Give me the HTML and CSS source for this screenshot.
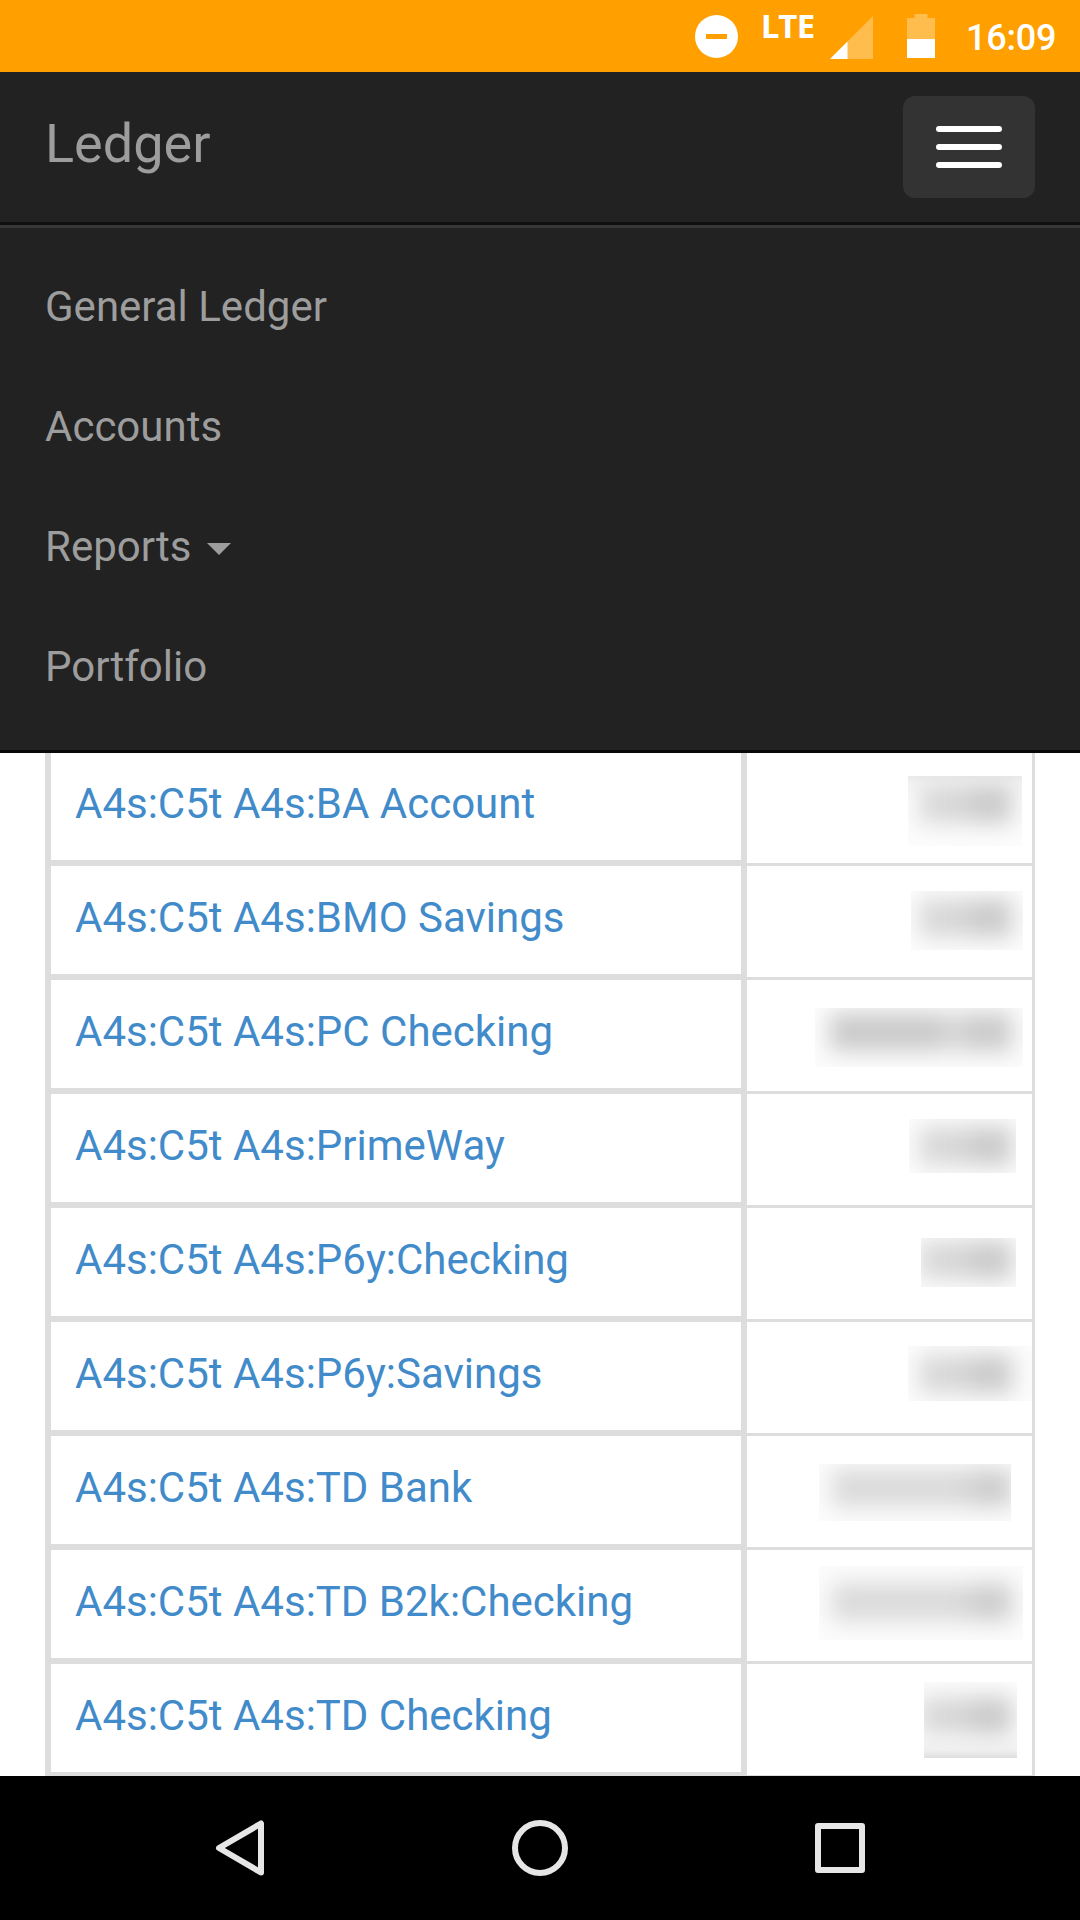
FILE: index.html
```html
<!DOCTYPE html>
<html lang="en">
<head>
<meta charset="utf-8">
<title>Ledger</title>
<link rel="stylesheet" href="styles.css">
</head>
<body>
<div class="status-bar">
  <svg class="dnd" width="43" height="43" viewBox="0 0 43 43"><circle cx="21.5" cy="21.5" r="21.5" fill="#fff"/><rect x="11" y="19" width="21" height="5" fill="#ffa000"/></svg>
  <span class="network">LTE</span>
  <svg class="signal" width="43" height="43" viewBox="0 0 43 43"><path d="M0 43L43 0V43Z" fill="#ffbd4d"/><path d="M0 43L17.5 25.5V43Z" fill="#fff"/></svg>
  <svg class="battery" width="28" height="44" viewBox="0 0 28 44"><path d="M7.5 0H20.500V4H28V44H0V4H7.500Z" fill="#ffbd4d"/><rect y="25" width="28" height="19" fill="#fff"/></svg>
  <span class="clock">16:09</span>
</div>
<header class="navbar">
  <div class="navbar-header">
    <a class="brand">Ledger</a>
    <button class="toggle" aria-label="Toggle navigation"><span></span><span></span><span></span></button>
  </div>
  <nav class="menu">
    <a>General Ledger</a>
    <a>Accounts</a>
    <a>Reports<i class="caret"></i></a>
    <a>Portfolio</a>
  </nav>
</header>
<main class="accounts">
  <div class="row"><a class="name">A4s:C5t A4s:BA Account</a><div class="amount"><div class="redacted r1 short"></div></div></div>
  <div class="row"><a class="name">A4s:C5t A4s:BMO Savings</a><div class="amount"><div class="redacted r2 short"></div></div></div>
  <div class="row"><a class="name">A4s:C5t A4s:PC Checking</a><div class="amount"><div class="redacted r3 wide"></div></div></div>
  <div class="row"><a class="name">A4s:C5t A4s:PrimeWay</a><div class="amount"><div class="redacted r4 short"></div></div></div>
  <div class="row"><a class="name">A4s:C5t A4s:P6y:Checking</a><div class="amount"><div class="redacted r5 short"></div></div></div>
  <div class="row"><a class="name">A4s:C5t A4s:P6y:Savings</a><div class="amount"><div class="redacted r6 short"></div></div></div>
  <div class="row"><a class="name">A4s:C5t A4s:TD Bank</a><div class="amount"><div class="redacted r7 long"></div></div></div>
  <div class="row"><a class="name">A4s:C5t A4s:TD B2k:Checking</a><div class="amount"><div class="redacted r8 long"></div></div></div>
  <div class="row"><a class="name">A4s:C5t A4s:TD Checking</a><div class="amount"><div class="redacted r9 short"></div></div></div>
</main>
<footer class="system-nav">
  <svg width="56" height="60" viewBox="0 0 56 60"><path d="M47 5.500V54.500L5 30Z"/></svg>
  <svg width="60" height="60" viewBox="0 0 60 60"><circle cx="30" cy="30" r="25"/></svg>
  <svg width="60" height="60" viewBox="0 0 60 60"><rect x="8" y="8" width="44" height="44"/></svg>
</footer>
</body>
</html>
```

FILE: styles.css
```css
* { box-sizing: border-box; }
body {
  margin: 0;
  width: 1080px;
  height: 1920px;
  overflow: hidden;
  display: flex;
  flex-direction: column;
  background: #fff;
  font: 42px/60px Roboto, sans-serif;
}

/* Status bar */
.status-bar {
  flex: none;
  height: 72px;
  display: flex;
  align-items: flex-start;
  padding-left: 695px;
  background: #ffa000;
  color: #fff;
}
.dnd { margin-top: 15px; }
.network {
  width: 54px;
  margin: 10px 0 0 23px;
  font: bold 33px/32px "Noto Sans", sans-serif;
  letter-spacing: -0.5px;
}
.signal { margin: 16px 0 0 15px; }
.battery { margin: 14px 0 0 34px; }
.clock {
  margin: 15px 0 0 31px;
  font-size: 36px;
  line-height: 46px;
  font-weight: 500;
  letter-spacing: -0.2px;
}

/* Navbar */
.navbar {
  flex: none;
  height: 681px;
  background: #222;
  border-bottom: 3px solid #080808;
  color: #9d9d9d;
  position: relative;
}
.navbar-header {
  height: 153px;
  padding: 24px 45px 0;
  display: flex;
  justify-content: space-between;
  align-items: flex-start;
  border-bottom: 3px solid #101010;
}
.brand {
  margin-top: 18px;
  font-size: 54px;
  line-height: 60px;
}
.toggle {
  width: 132px;
  height: 102px;
  padding: 0;
  border: 0;
  border-radius: 12px;
  background: #333;
  display: flex;
  flex-direction: column;
  align-items: center;
  justify-content: center;
  gap: 12px;
}
.toggle span {
  width: 66px;
  height: 6px;
  border-radius: 3px;
  background: #fff;
}
.menu {
  display: flex;
  flex-direction: column;
  gap: 60px;
  padding: 49px 45px 0;
  border-top: 3px solid #373737;
}
.menu a { display: flex; align-items: center; height: 60px; }
.caret {
  margin: 4px 0 0 16px;
  border: 12px solid transparent;
  border-top-color: #9d9d9d;
  border-bottom: 0;
}

/* Accounts table: its first row begins just beneath the navbar edge */
.accounts {
  flex: none;
  height: 1024px;
  margin: -1px 45px 0;
  overflow: hidden;
  border-left: 6px solid #ddd;
  border-right: 3px solid #ddd;
}
.row {
  height: 114px;
  display: grid;
  grid-template-columns: 696px 1fr;
}
.name {
  padding: 22px 24px 0;
  border-right: 6px solid #ddd;
  border-bottom: 6px solid #ddd;
  color: #428bca;
}
.amount { border-bottom: 3px solid #ddd; }
.redacted {
  position: relative;
  height: 100%;
  background: #fcfcfc;
}
.redacted::before {
  content: "";
  position: absolute;
  top: 33px;
  right: 20px;
  width: 92px;
  height: 38px;
  filter: blur(11px);
  background: linear-gradient(90deg, #d7d7d7 45%, #cacaca 62%);
}
.wide::before { width: 182px; background: linear-gradient(90deg, #cacaca 58%, #dbdbdb 68%, #cacaca 78%); }
.long::before { width: 180px; background: linear-gradient(90deg, #dadada 72%, #cdcdcd 82%); }
.r1 { clip-path: inset(24px 10px 17px 161px); background: linear-gradient(#ebebeb 24px, #f5f5f5 32px, #fcfcfc 50px); }
.r2 { clip-path: inset(25px 9px 27px 164px); }
.r3 { clip-path: inset(28px 9px 24px 68px); }
.r4 { clip-path: inset(25px 16px 32px 162px); }
.r5 { clip-path: inset(30px 16px 32px 174px); }
.r6 { clip-path: inset(24px 0 32px 161px); }
.r7 { clip-path: inset(28px 21px 26px 72px); }
.r8 { clip-path: inset(16px 9px 21px 72px); }
.r9 { clip-path: inset(18px 15px 17px 177px); background: linear-gradient(#fcfcfc 70px, #f2f2f2 86px, #dfdfdf 94px); }

/* System navigation */
.system-nav {
  flex: none;
  height: 144px;
  display: flex;
  align-items: center;
  gap: 240px;
  padding-left: 214px;
  background: #000;
}
.system-nav svg {
  fill: none;
  stroke: #e6e6e6;
  stroke-width: 6;
  stroke-linejoin: round;
}
```
